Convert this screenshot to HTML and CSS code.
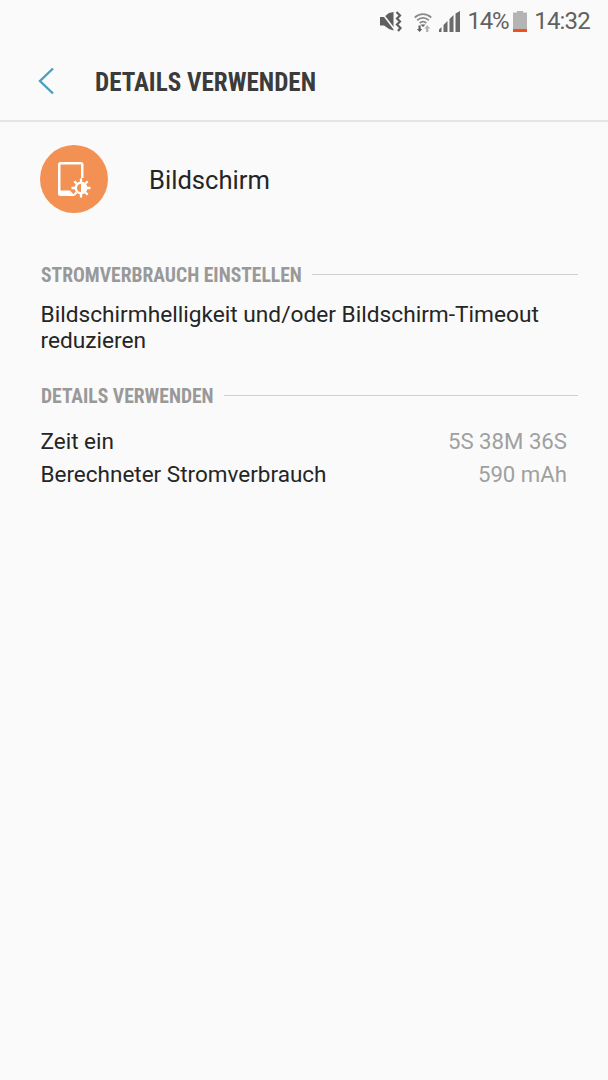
FILE: index.html
```html
<!DOCTYPE html>
<html lang="de">
<head>
<meta charset="utf-8">
<title>Details verwenden</title>
<link rel="stylesheet" href="styles.css">
</head>
<body>
<div class="status">
  <svg class="ic-mute" width="22" height="21" viewBox="0 0 22 21"><path d="M0 6h4L9 2l4.500-1V19.500L9 18 4 14.500H0z" fill="#5f5f5f"/><path d="M1.500 1.500L15 19" stroke="#fafafa" stroke-width="1.600"/><path d="M16.500 1l3.500 3.500-3 3 3 3-3 3 3.500 3.500-2.500 3" fill="none" stroke="#5f5f5f" stroke-width="2.200"/></svg>
  <svg class="ic-wifi" width="18" height="21" viewBox="0 0 18 21"><path d="M.8 6.500a11.800 11.800 0 0 1 16.400 0M3.200 9.300a8.300 8.300 0 0 1 11.600 0M5.700 12a4.800 4.800 0 0 1 6.600 0" fill="none" stroke="#8a8a8a" stroke-width="1.800"/><path d="M6.500 13.500h5L9 16z" fill="#5f5f5f"/><path d="M4.500 14.500h2.200V18h1.600l-2.700 3-2.700-3h1.600z" fill="#5f5f5f"/><path d="M12 21v-3.500h-1.800l3-3.500 3 3.500h-1.800V21z" fill="#b5b5b5"/></svg>
  <svg class="ic-signal" width="21" height="21" viewBox="0 0 21 21"><path d="M0 21v-2.500L2.500 16v5zM4.500 21v-7L8.500 10v11zM10.500 21V8L14.500 4v17zM16.500 21V2.500L21 0v21z" fill="#6b6b6b"/></svg>
  <span class="pct">14%</span>
  <svg class="ic-batt" width="14" height="21" viewBox="0 0 14 21"><path d="M4 0h6v1.500h4V18H0V1.500h4z" fill="#b4b4b4"/><rect y="18" width="14" height="3" fill="#f0501e"/></svg>
  <span class="clock">14:32</span>
</div>
<header class="bar">
  <svg class="back" width="18" height="28" viewBox="0 0 18 28"><path d="M16 1.500L3 14l13 12.500" fill="none" stroke="#4a9fc0" stroke-width="2.400"/></svg>
  <h1 class="title">DETAILS VERWENDEN</h1>
</header>
<main class="content">
  <div class="app">
    <div class="app-icon">
      <svg width="68" height="68" viewBox="0 0 68 68"><path d="M18 19.500A2.500 2.500 0 0 1 20.500 17H41a2.500 2.500 0 0 1 2.500 2.500V33H41V19.500H20.500V45.500H29c1 0 1.500 .5 2 1l4 4.500H20.500A2.500 2.500 0 0 1 18 48.500z" fill="#fff"/><circle cx="41" cy="43" r="5.200" fill="none" stroke="#fff" stroke-width="2.400"/><path d="M41 37a6 6 0 0 1 0 12z" fill="#fff"/><path d="M41 33.500v3.500M41 49v3.500M31.500 43H35M47 43h3.500M34.300 36.300l2.300 2.300M45.400 47.400l2.300 2.300M34.300 49.700l2.300-2.300M45.400 38.600l2.300-2.300" stroke="#fff" stroke-width="2.300"/></svg>
    </div>
    <span class="app-name">Bildschirm</span>
  </div>
  <div class="section s-first"><span class="sec-label">STROMVERBRAUCH EINSTELLEN</span><span class="sec-line"></span></div>
  <p class="tip">Bildschirmhelligkeit und/oder Bildschirm-Timeout reduzieren</p>
  <div class="section s-second"><span class="sec-label">DETAILS VERWENDEN</span><span class="sec-line"></span></div>
  <div class="row r-first"><span>Zeit ein</span><span class="val">5S 38M 36S</span></div>
  <div class="row"><span>Berechneter Stromverbrauch</span><span class="val">590 mAh</span></div>
</main>
</body>
</html>
```
FILE: styles.css
```css
* { box-sizing: border-box; }
html, body { margin: 0; padding: 0; }
body {
  width: 608px;
  height: 1080px;
  background: #fafafa;
  font-family: Roboto, "Liberation Sans", sans-serif;
  color: #252525;
  overflow: hidden;
}
.status {
  height: 42px;
  display: flex;
  align-items: center;
  justify-content: flex-end;
  padding: 0 18px 0 0;
  color: #616161;
  font-size: 24px;
  letter-spacing: -0.8px;
}
.ic-mute { margin-right: 12px; }
.ic-wifi { margin-right: 7px; }
.ic-signal { margin-right: 8px; }
.pct { margin-right: 5px; letter-spacing: -1.3px; }
.ic-batt { margin-right: 7px; }
.bar {
  height: 80px;
  display: flex;
  align-items: center;
  border-bottom: 2px solid #e4e4e4;
  padding: 0 0 0 37px;
}
.back { margin-right: 40px; }
.title {
  margin: 2px 0 0;
  font-size: 25.1px;
  font-weight: 700;
  color: #3b3b3b;
  font-stretch: condensed;
  white-space: nowrap;
}
.content { padding: 0 30px 0 40px; }
.app {
  display: flex;
  align-items: center;
  margin-top: 23px;
}
.app-icon {
  width: 68px;
  height: 68px;
  border-radius: 50%;
  background: #f29153;
  margin-right: 41px;
}
.app-icon svg { display: block; }
.app-name { font-size: 25.6px; color: #252525; position: relative; top: 1px; }
.section {
  display: flex;
  align-items: center;
}
.s-first { margin-top: 49px; height: 24px; }
.s-second { margin-top: 29px; height: 24px; }
.sec-label {
  font-size: 19.6px;
  font-weight: 700;
  color: #999;
  white-space: nowrap;
  font-stretch: condensed;
  margin: 2px 0 0 1px;
}
.sec-line {
  flex: 1;
  height: 1px;
  background: #cfcfcf;
  margin-left: 10px;
}
.tip {
  margin: 16px 0 0 .5px;
  font-size: 22.7px;
  line-height: 26px;
  color: #252525;
}
.row {
  display: flex;
  justify-content: space-between;
  font-size: 22.5px;
  line-height: 33px;
  padding-right: 11px;
  padding-left: .5px;
}
.r-first { margin-top: 18px; }
.val { color: #a0a0a0; font-size: 22.2px; }
```
